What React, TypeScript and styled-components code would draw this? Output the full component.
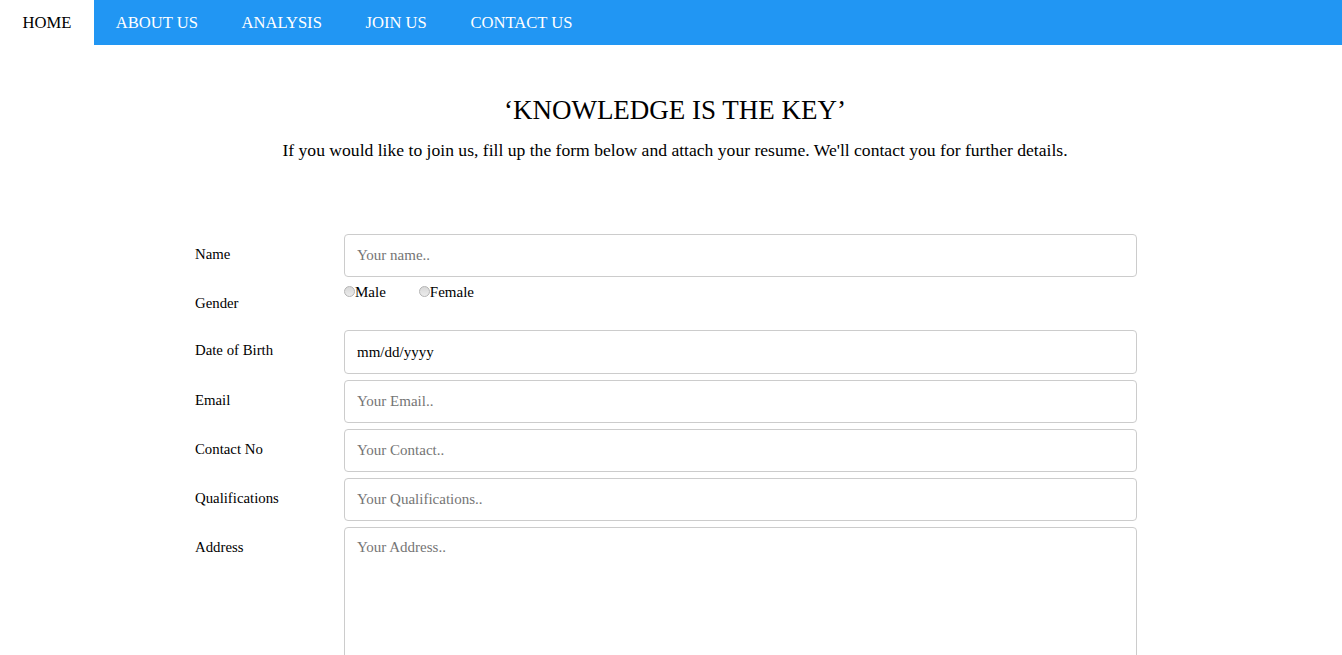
import React from "react";
import styled, { createGlobalStyle } from "styled-components";

const Global = createGlobalStyle`
  html, body { margin: 0; padding: 0; background: #fff; }
  body { font-family: "Liberation Serif", "Times New Roman", serif; color: #000; }
  * { box-sizing: border-box; }
`;

const Nav = styled.nav`
  display: flex;
  height: 45px;
  background: #2196f3;
`;

const NavItem = styled.a<{ $active?: boolean }>`
  display: flex;
  align-items: center;
  padding: 0 ${(p) => (p.$active ? "22.5px" : "21.8px")};
  font-size: 16.6px;
  text-decoration: none;
  color: ${(p) => (p.$active ? "#000" : "#fff")};
  background: ${(p) => (p.$active ? "#fff" : "transparent")};
`;

const Main = styled.main`
  padding-left: 8px;
`;

const Hero = styled.header`
  text-align: center;
  padding-top: 50px;
`;

const Title = styled.h2`
  margin: 0;
  font-size: 27px;
  font-weight: normal;
  line-height: 30px;
`;

const Lead = styled.p`
  margin: 15px 0 0;
  font-size: 17.6px;
  line-height: 20px;
`;

const Form = styled.form`
  width: 942px;
  margin: 74px 0 0 187px;
  display: flex;
  flex-direction: column;
  gap: 6px;
`;

const Row = styled.div`
  display: grid;
  grid-template-columns: 149px 1fr;
  align-items: start;
`;

const Label = styled.label`
  padding: 11px 0 12px;
  font-size: 14.8px;
  line-height: 18px;
`;

const Field = styled.input<{ $dark?: boolean; $tall?: boolean }>`
  width: 100%;
  height: ${(p) => (p.$tall ? "44px" : "43px")};
  padding: 0 12px;
  border: 1px solid #ccc;
  border-radius: 4px;
  font-family: inherit;
  font-size: 15px;
  color: #000;
  &::placeholder { color: ${(p) => (p.$dark ? "#000" : "#757575")}; }
`;

const Area = styled.textarea`
  width: 100%;
  height: 200px;
  padding: 11px 12px;
  border: 1px solid #ccc;
  border-radius: 4px;
  font-family: inherit;
  font-size: 15px;
  resize: vertical;
  &::placeholder { color: #757575; }
`;

const Radios = styled.div`
  display: flex;
  align-items: flex-start;
  gap: 33px;
  font-size: 15px;
  line-height: 18px;
`;

const RadioLabel = styled.label`
  display: flex;
  align-items: flex-start;
`;

const Radio = styled.input`
  appearance: none;
  width: 11px;
  height: 11px;
  margin: 3px 0 0 0;
  border-radius: 50%;
  border: 1px solid #b4b4b4;
  background: linear-gradient(#d8d8d8, #ececec);
`;

export default function App() {
  return (
    <>
      <Global />
      <Nav>
        <NavItem $active href="#">HOME</NavItem>
        <NavItem href="#">ABOUT US</NavItem>
        <NavItem href="#">ANALYSIS</NavItem>
        <NavItem href="#">JOIN US</NavItem>
        <NavItem href="#">CONTACT US</NavItem>
      </Nav>
      <Main>
        <Hero>
          <Title>‘KNOWLEDGE IS THE KEY’</Title>
          <Lead>
            If you would like to join us, fill up the form below and attach your resume. We'll contact you for further details.
          </Lead>
        </Hero>
        <Form>
          <Row>
            <Label>Name</Label>
            <Field placeholder="Your name.." />
          </Row>
          <Row>
            <Label>Gender</Label>
            <Radios>
              <RadioLabel><Radio type="radio" name="g" />Male</RadioLabel>
              <RadioLabel><Radio type="radio" name="g" />Female</RadioLabel>
            </Radios>
          </Row>
          <Row>
            <Label>Date of Birth</Label>
            <Field $dark $tall placeholder="mm/dd/yyyy" />
          </Row>
          <Row>
            <Label>Email</Label>
            <Field placeholder="Your Email.." />
          </Row>
          <Row>
            <Label>Contact No</Label>
            <Field placeholder="Your Contact.." />
          </Row>
          <Row>
            <Label>Qualifications</Label>
            <Field placeholder="Your Qualifications.." />
          </Row>
          <Row>
            <Label>Address</Label>
            <Area placeholder="Your Address.." />
          </Row>
        </Form>
      </Main>
    </>
  );
}
